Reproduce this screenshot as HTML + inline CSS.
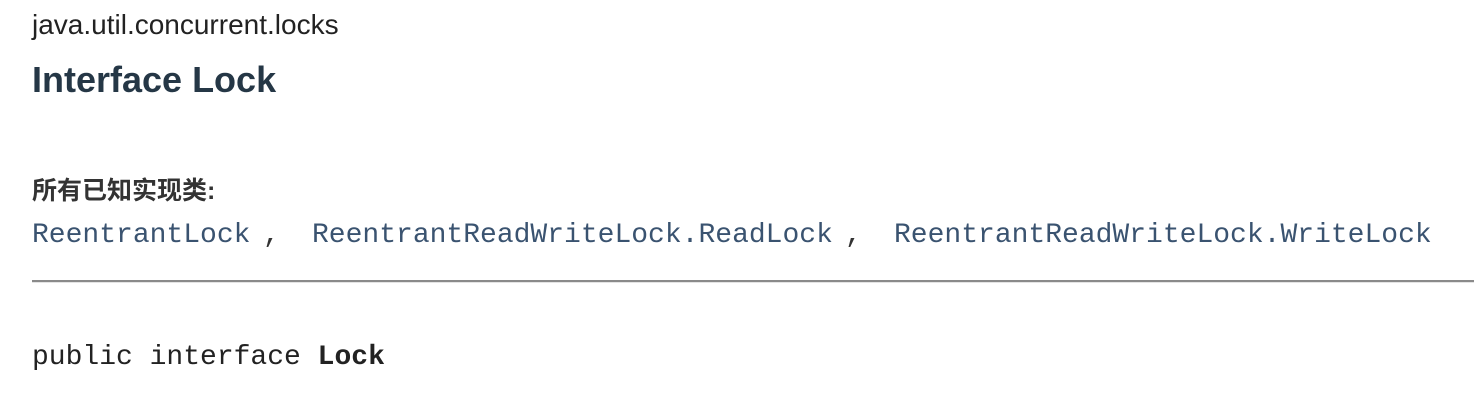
<!DOCTYPE html>
<html><head><meta charset="utf-8"><style>
html,body{margin:0;padding:0;background:#fff;width:1474px;height:400px;overflow:hidden;position:relative}
.a{position:absolute;white-space:nowrap}
.pk{left:32px;top:9px;font:28px "Liberation Sans",sans-serif;color:#222}
.h{left:32px;top:59px;font:bold 36px "Liberation Sans",sans-serif;color:#253746}
.zh{left:32px;top:171px;font:bold 25px "Liberation Sans","Noto Sans CJK SC",sans-serif;color:#333}
.m{font:28px "Liberation Mono",monospace;top:220px;color:#3a5370}
.c{color:#333}
.hr{left:32px;right:0;top:280px;height:2px;background:#8a8a8a;border-bottom:1px solid #e4e4e4}
.p{left:32px;top:342px;font:28px "Liberation Mono",monospace;color:#222}
</style></head><body>
<div class="a pk">java.util.concurrent.locks</div>
<div class="a h">Interface Lock</div>
<div class="a zh">所有已知实现类:</div>
<div class="a m" style="left:32px">ReentrantLock</div>
<div class="a m c" style="left:263px">,</div>
<div class="a m" style="left:312px">ReentrantReadWriteLock.ReadLock</div>
<div class="a m c" style="left:845px">,</div>
<div class="a m" style="left:894px">ReentrantReadWriteLock.WriteLock</div>
<div class="a hr"></div>
<div class="a p">public interface <b>Lock</b></div>
</body></html>
